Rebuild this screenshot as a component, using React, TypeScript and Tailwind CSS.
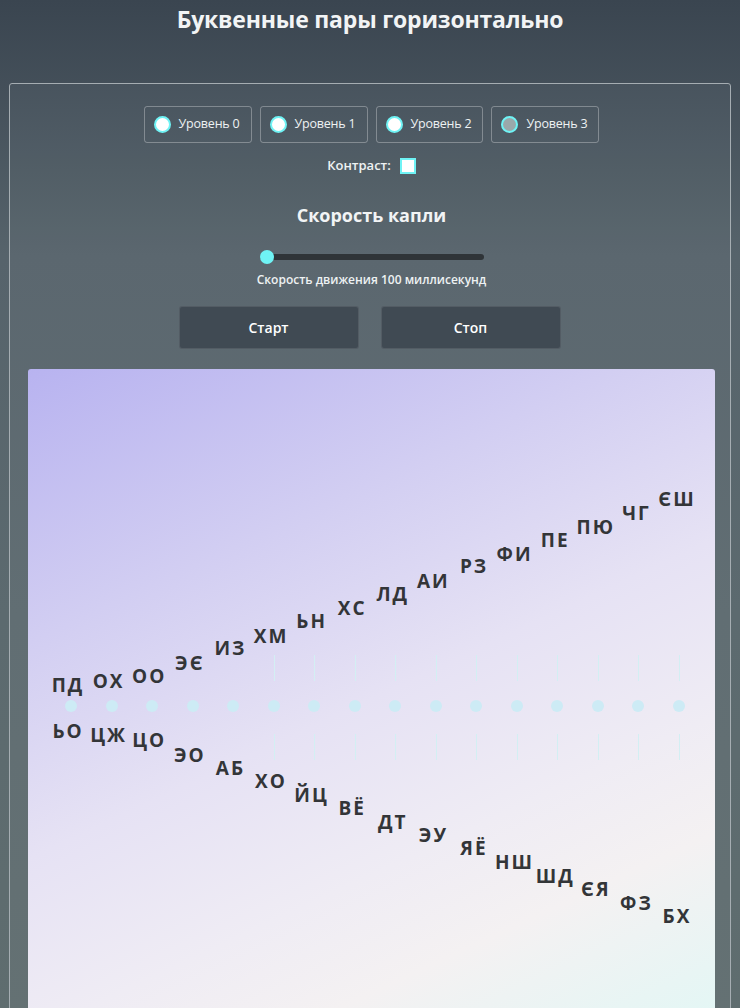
import { useState } from "react";

const top = ["ПД", "ОХ", "ОО", "ЭЄ", "ИЗ", "ХМ", "ЬН", "ХС", "ЛД", "АИ", "РЗ", "ФИ", "ПЕ", "ПЮ", "ЧГ", "ЄШ"];
const bottom = ["ЬО", "ЦЖ", "ЦО", "ЭО", "АБ", "ХО", "ЙЦ", "ВЁ", "ДТ", "ЭУ", "ЯЁ", "НШ", "ШД", "ЄЯ", "ФЗ", "БХ"];
const topY = [316, 312, 307, 294, 279, 267, 252, 239, 225, 212, 197, 185, 171, 158, 144, 130];
const bottomY = [362, 366, 371, 386, 399, 412, 426, 439, 453, 466, 479, 493, 507, 520, 534, 547];

const levels = ["Уровень 0", "Уровень 1", "Уровень 2", "Уровень 3"];

const App = () => {
  const [level, setLevel] = useState(3);
  const [speed, setSpeed] = useState(100);

  return (
    <div
      className="min-h-[1008px] w-full bg-[linear-gradient(180deg,#3a4550_0%,#56636b_25%,#5c6a6f_60%,#5f6d6f_100%)] text-white px-[9px] overflow-hidden"
      style={{ fontFamily: "'Open Sans', 'DejaVu Sans', sans-serif" }}
    >
      <h1 className="text-center text-[23px] font-bold pt-[2px] h-[83px] tracking-[-0.2px] text-[#f2f4f5]">
        Буквенные пары горизонтально
      </h1>

      <div className="border border-[#a5adb2] rounded-[3px] bg-white/[0.03] pt-[22px] pl-[18px] pr-[15px] h-[940px]">
        <div className="flex justify-center gap-[8px] text-[12.5px] text-[#eef2f3] tracking-[-0.2px]">
          {levels.map((l, i) => (
            <button
              key={l}
              onClick={() => setLevel(i)}
              className="h-[37px] flex items-center gap-[8px] pl-[9px] pr-[11px] border border-white/30 rounded-[3px]"
            >
              <span
                className={
                  "w-[17px] h-[17px] rounded-full border-[2px] border-[#6ff3f5] " +
                  (level === i ? "bg-[#9aa9ab]" : "bg-white")
                }
              />
              {l}
            </button>
          ))}
        </div>

        <div className="flex justify-center items-center gap-[9px] mt-[13px] text-[13px] font-semibold text-[#eef2f3]">
          Контраст:
          <span className="w-[16px] h-[16px] border-[2px] border-[#6ff3f5] bg-white" />
        </div>

        <div className="text-center text-[18px] font-bold mt-[26px] text-[#f2f4f5]">Скорость капли</div>

        <div className="flex justify-center mt-[25px]">
          <div className="relative w-[224px] h-[6px] rounded-full bg-[#2f3438]">
            <span className="absolute left-[0px] top-[-4px] w-[14px] h-[14px] rounded-full bg-[#6ff3f5]" />
          </div>
        </div>
        <div className="text-center text-[12px] font-semibold mt-[11px] text-[#eef2f3]" onClick={() => setSpeed(speed)}>
          Скорость движения {speed} миллисекунд
        </div>

        <div className="flex justify-center gap-[22px] mt-[17px] pr-[4px]">
          <button className="w-[180px] h-[43px] rounded-[3px] bg-[#404a53] border border-white/10 text-[14px] font-semibold">
            Старт
          </button>
          <button className="w-[180px] h-[43px] rounded-[3px] bg-[#404a53] border border-white/10 text-[14px] font-semibold">
            Стоп
          </button>
        </div>

        <div className="relative mt-[20px] h-[660px] rounded-[3px] bg-[linear-gradient(155deg,#b8b3f0_0%,#d2cef2_28%,#e6e2f4_50%,#efecf4_68%,#f4f1f2_80%,#e2f7f5_100%)] text-[#333538]">
          {/* drops between the two rows */}
          {top.map((_, i) => (
            <span
              key={"d" + i}
              className="absolute w-[12px] h-[12px] rounded-full bg-[#cdebf5]"
              style={{ left: 37 + i * 40.5, top: 331 }}
            />
          ))}
          {top.map((_, i) =>
            i >= 5 ? (
              <span key={"lt" + i}>
                <span
                  className="absolute w-[1px] h-[26px] bg-[#d3eff3]"
                  style={{ left: 43 + i * 40.5, top: 286 }}
                />
                <span
                  className="absolute w-[1px] h-[26px] bg-[#d3eff3]"
                  style={{ left: 43 + i * 40.5, top: 365 }}
                />
              </span>
            ) : null
          )}
          {top.map((p, i) => (
            <span
              key={"t" + i}
              className="absolute -translate-x-1/2 -translate-y-1/2 text-[19px] font-bold tracking-[2px] leading-none"
              style={{ left: 40 + i * 40.6, top: topY[i] }}
            >
              {p}
            </span>
          ))}
          {bottom.map((p, i) => (
            <span
              key={"b" + i}
              className="absolute -translate-x-1/2 -translate-y-1/2 text-[19px] font-bold tracking-[2px] leading-none"
              style={{ left: 40 + i * 40.6, top: bottomY[i] }}
            >
              {p}
            </span>
          ))}
        </div>
      </div>
    </div>
  );
};

export default App;
